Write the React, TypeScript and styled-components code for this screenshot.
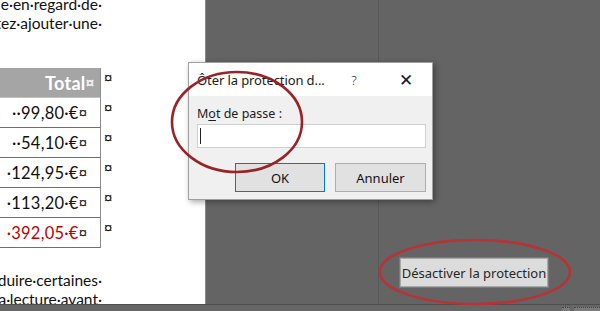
import styled, { createGlobalStyle } from 'styled-components';

const GlobalStyle = createGlobalStyle`
	html, body {
		margin: 0;
		padding: 0;
		width: 600px;
		height: 311px;
		overflow: hidden;
		background: #646464;
	}
`;

const rows: { value: string; total?: boolean }[] = [
	{ value: '··99,80·€' },
	{ value: '··54,10·€' },
	{ value: '·124,95·€' },
	{ value: '·113,20·€' },
	{ value: '·392,05·€', total: true },
];

const Screen = styled.div`
	position: relative;
	width: 600px;
	height: 311px;
	display: flex;
	flex-direction: column;
	overflow: hidden;
	font-family: Lato, 'Liberation Sans', sans-serif;
`;

const Workspace = styled.div`
	flex: 1;
	display: flex;
	min-height: 0;
`;

const Page = styled.div`
	width: 206px;
	background: #fff;
	border-right: 1px solid #8a8a8a;
	overflow: hidden;
	display: flex;
	flex-direction: column;
	padding-right: 103px;
	box-sizing: border-box;
`;

const Line = styled.div<{ $top?: number }>`
	display: flex;
	justify-content: flex-end;
	white-space: nowrap;
	font-size: 15.5px;
	line-height: 19px;
	height: 19px;
	color: #111;
	margin-top: ${p => p.$top ?? 0}px;
`;

const Table = styled.div`
	margin-top: 35px;
	display: flex;
	flex-direction: column;
	margin-right: -2px;
`;

const TableRow = styled.div`
	display: flex;
	align-items: flex-start;
`;

const Cell = styled.div<{ $head?: boolean; $red?: boolean }>`
	width: 101px;
	flex-shrink: 0;
	height: 30px;
	box-sizing: border-box;
	display: flex;
	align-items: center;
	justify-content: flex-end;
	white-space: nowrap;
	padding-right: ${p => (p.$head ? 6 : 13)}px;
	font-size: ${p => (p.$head ? 18 : 16.5)}px;
	letter-spacing: ${p => (p.$head ? 0.3 : 0.25)}px;
	font-weight: ${p => (p.$head ? 700 : 400)};
	color: ${p => (p.$head ? '#fff' : p.$red ? '#c00000' : '#111')};
	background: ${p => (p.$head ? '#a5a5a5' : '#fff')};
	border-right: 1px solid #8c8c8c;
	border-bottom: 1px solid ${p => (p.$head ? '#c0c0c0' : '#6e6e6e')};
`;

const Mark = styled.span<{ $light?: boolean }>`
	font-family: 'Liberation Sans', sans-serif;
	font-size: 15px;
	font-weight: ${p => (p.$light ? 700 : 400)};
	letter-spacing: 0;
	color: ${p => (p.$light ? '#f2f2f2' : '#222')};
`;

const RowMark = styled.span`
	font-family: 'Liberation Sans', sans-serif;
	font-size: 15px;
	color: #111;
	padding: 2px 0 0 3px;
	line-height: 16px;
`;

const AfterTable = styled.div`
	margin-top: 23px;
	display: flex;
	flex-direction: column;
`;

const Pane = styled.div`
	width: 172px;
	background: #646464;
	border-right: 1px solid #585858;
`;

const SidePane = styled.div`
	flex: 1;
	background: #646464;
	display: flex;
	align-items: flex-end;
	padding: 0 0 17px 21px;
`;

const GrayButton = styled.button`
	width: 148px;
	height: 29px;
	background: #dcdcdc;
	border: 1px solid #a8a8a8;
	outline: 1px solid #7a7a7a;
	font-family: 'Noto Sans', 'Open Sans', sans-serif;
	font-size: 13px;
	color: #262626;
	padding: 0;
`;

const StatusBar = styled.div`
	height: 6px;
	background: #666;
	border-top: 1px solid #4e4e4e;
	display: flex;
	justify-content: flex-end;
	gap: 4px;
`;

const StatusBox = styled.div<{ $w: number }>`
	width: ${p => p.$w}px;
	margin-top: 2px;
	background: #7a7a7a;
	border-top: 1px dotted #444;
`;

const Dialog = styled.div`
	position: absolute;
	left: 188px;
	top: 62px;
	width: 245px;
	background: #f0f0f0;
	border: 1px solid #a0a0a0;
	box-shadow: 2px 2px 6px rgba(0, 0, 0, 0.35);
	font-family: 'Noto Sans', 'Open Sans', sans-serif;
	color: #1a1a1a;
	box-sizing: border-box;
`;

const TitleBar = styled.div`
	height: 33px;
	background: #fff;
	display: flex;
	align-items: center;
	padding-left: 8px;
	font-size: 13px;
`;

const Title = styled.span`
	flex: 1;
	white-space: nowrap;
	letter-spacing: -0.1px;
`;

const TitleAction = styled.span<{ $big?: boolean }>`
	width: 52px;
	text-align: center;
	font-size: ${p => (p.$big ? 17 : 13)}px;
	font-weight: 300;
`;

const Body = styled.div`
	display: flex;
	flex-direction: column;
	padding: 9px 6px 7px 8px;
`;

const Label = styled.label`
	font-size: 12.5px;
	height: 18px;
	u {
		text-decoration-thickness: 1px;
		text-underline-offset: 2px;
	}
`;

const Input = styled.div`
	margin-top: 1px;
	height: 24px;
	background: #fff;
	border: 1px solid #cfcfcf;
	box-sizing: border-box;
	display: flex;
	align-items: center;
	padding-left: 2px;
`;

const Caret = styled.span`
	width: 1px;
	height: 16px;
	background: #222;
`;

const Buttons = styled.div`
	display: flex;
	justify-content: flex-end;
	gap: 10px;
	margin-top: 15px;
`;

const DialogButton = styled.button<{ $primary?: boolean }>`
	width: ${p => (p.$primary ? 90 : 91)}px;
	height: 29px;
	background: #e1e1e1;
	border: 1px solid ${p => (p.$primary ? '#0078d7' : '#adadad')};
	font-family: 'Noto Sans', 'Open Sans', sans-serif;
	font-size: 13px;
	color: #111;
	padding: 0;
`;

const Annotations = styled.svg`
	position: absolute;
	left: 0;
	top: 0;
	pointer-events: none;
`;

const App = () => {
	return <Screen>
		<GlobalStyle />
		<Workspace>
			<Page>
				<Line $top={-5}>e·en·regard·de·</Line>
				<Line>tez·ajouter·une·</Line>
				<Table>
					<TableRow>
						<Cell $head>Total<Mark $light>¤</Mark></Cell>
						<RowMark>¤</RowMark>
					</TableRow>
					{ rows.map((r, i) => <TableRow key={i}>
						<Cell $red={r.total}>{ r.value }<Mark>¤</Mark></Cell>
						<RowMark>¤</RowMark>
					</TableRow>) }
				</Table>
				<AfterTable>
					<Line>duire·certaines·</Line>
					<Line>a·lecture·avant·</Line>
				</AfterTable>
			</Page>
			<Pane />
			<SidePane>
				<GrayButton>Désactiver la protection</GrayButton>
			</SidePane>
		</Workspace>
		<StatusBar>
			<StatusBox $w={8} />
			<StatusBox $w={26} />
		</StatusBar>

		<Dialog>
			<TitleBar>
				<Title>Ôter la protection d...</Title>
				<TitleAction>?</TitleAction>
				<TitleAction $big>✕</TitleAction>
			</TitleBar>
			<Body>
				<Label>M<u>o</u>t de passe :</Label>
				<Input><Caret /></Input>
				<Buttons>
					<DialogButton $primary>OK</DialogButton>
					<DialogButton>Annuler</DialogButton>
				</Buttons>
			</Body>
		</Dialog>

		<Annotations width={600} height={311} viewBox='0 0 600 311'>
			<ellipse cx={237} cy={122} rx={65} ry={50} fill='none' stroke='#9a2327' strokeWidth={2.6} />
			<ellipse cx={475} cy={272} rx={95} ry={32} fill='none' stroke='#b83236' strokeWidth={2.6} />
		</Annotations>
	</Screen>;
};

export default App;
